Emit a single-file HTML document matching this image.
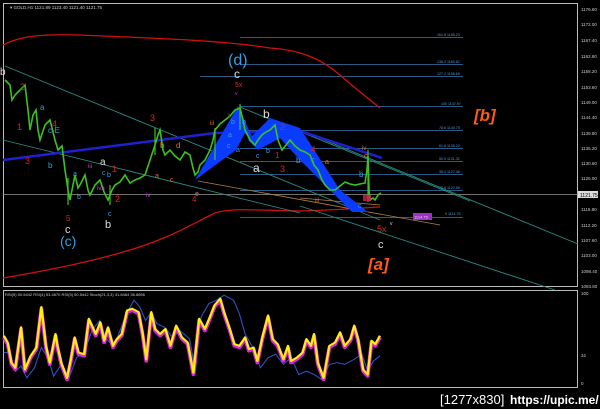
<!DOCTYPE html>
<html><head><style>
html,body{margin:0;padding:0;background:#000;width:600px;height:409px;overflow:hidden}
svg{display:block}
text{font-family:"Liberation Sans",sans-serif}
</style></head><body>
<svg width="600" height="409" viewBox="0 0 600 409" xmlns="http://www.w3.org/2000/svg">
<rect width="600" height="409" fill="#000"/>
<rect x="3.5" y="3.5" width="574" height="283" fill="none" stroke="#bbb" stroke-width="1"/>
<rect x="3.5" y="290.5" width="574" height="97" fill="none" stroke="#bbb" stroke-width="1"/>
<line x1="3" y1="194.5" x2="578" y2="194.5" stroke="#999" stroke-width="0.8"/>
<text x="10" y="9" fill="#ccc" font-size="4.5">▾ GOLD,H1  1121.89 1123.40 1121.40 1121.75</text>
<g fill="#ccc" font-size="4.5">
<text x="581" y="11">1176.60</text><text x="581" y="26">1172.00</text><text x="581" y="42">1167.40</text>
<text x="581" y="58">1162.80</text><text x="581" y="73">1158.20</text><text x="581" y="89">1153.60</text>
<text x="581" y="104">1149.00</text><text x="581" y="119">1144.40</text><text x="581" y="135">1139.80</text>
<text x="581" y="150">1135.20</text><text x="581" y="165">1130.60</text><text x="581" y="180">1126.00</text>
<text x="581" y="211">1116.80</text><text x="581" y="227">1112.20</text><text x="581" y="242">1107.60</text>
<text x="581" y="257">1103.00</text><text x="581" y="273">1098.40</text><text x="581" y="288">1093.80</text>
<text x="581" y="295">100</text><text x="581" y="357">32</text><text x="581" y="385">0</text>
</g>
<rect x="578" y="191" width="20" height="7" fill="#ddd"/>
<text x="580" y="197" fill="#000" font-size="5">1121.75</text>
<g stroke="#3a78b0" stroke-width="0.8">
<line x1="240" y1="37.5" x2="463" y2="37.5"/><line x1="240" y1="64.5" x2="463" y2="64.5"/>
<line x1="200" y1="76.5" x2="463" y2="76.5"/><line x1="240" y1="106.5" x2="463" y2="106.5"/>
<line x1="240" y1="130.5" x2="463" y2="130.5"/><line x1="240" y1="148.5" x2="463" y2="148.5"/>
<line x1="240" y1="161.5" x2="463" y2="161.5"/><line x1="240" y1="174.5" x2="463" y2="174.5"/>
<line x1="240" y1="190.5" x2="463" y2="190.5"/><line x1="240" y1="217.5" x2="463" y2="217.5"/>
</g>
<g fill="#5a9ad0" font-size="3.6">
<text x="437" y="36">161.8 1165.23</text><text x="437" y="63">138.2 1160.62</text><text x="437" y="75">127.2 1158.69</text>
<text x="441" y="105">100 1147.97</text><text x="439" y="129">78.6 1140.75</text><text x="439" y="147">61.8 1135.22</text>
<text x="439" y="160">50.0 1131.32</text><text x="439" y="173">38.2 1127.46</text><text x="439" y="189">23.6 1122.59</text>
<text x="445" y="215">0 1114.75</text>
</g>
<path d="M3,45 C20,36 40,34 80,35 C150,38 220,40 270,48 C300,50 320,58 340,75 C355,88 370,100 380,108" fill="none" stroke="#d01010" stroke-width="1.3"/>
<path d="M3,278 C50,270 90,262 130,250 C170,238 190,225 215,213 C230,208 250,210 300,211 C340,210 360,208 380,207" fill="none" stroke="#d01010" stroke-width="1.3"/>
<g stroke="#2a8a80" stroke-width="0.9" fill="none">
<line x1="5" y1="66" x2="380" y2="220"/>
<line x1="300" y1="130" x2="578" y2="244"/>
<line x1="300" y1="206" x2="555" y2="290"/>
<line x1="240" y1="107" x2="470" y2="201"/>
<line x1="3" y1="140" x2="300" y2="213"/>
</g>
<line x1="198" y1="181" x2="440" y2="225" stroke="#b08040" stroke-width="0.8"/>
<line x1="300" y1="198" x2="380" y2="205" stroke="#b08040" stroke-width="0.8"/>
<path d="M3,160 L215,133 L300,131 L382,158" fill="none" stroke="#2020d0" stroke-width="2.5"/>
<g fill="#0a3cff">
<polygon points="195,180 238,106 258,150 245,133 236,150"/>
<polygon points="248,140 270,118 300,128 340,190 368,212 352,212 300,160 280,138 258,150"/>
</g>
<polyline fill="none" stroke="#3ec020" stroke-width="1.6" points="5,80 10,85 12,100 15,95 20,90 25,85 28,110 30,130 33,115 36,110 38,130 40,140 45,125 50,120 53,132 55,140 58,150 62,146 65,170 68,190 70,200 73,185 75,175 78,188 80,185 85,175 88,190 90,195 95,185 100,180 104,192 108,200 112,190 115,185 120,182 125,175 130,183 135,180 140,178 145,175 150,160 155,145 158,135 160,130 163,150 165,155 170,150 175,156 180,160 185,152 190,155 193,168 195,175 198,172 200,165 205,160 210,150 213,140 215,130 220,124 225,120 230,116 235,110 240,108 243,120 245,130 250,140 255,145 258,140 262,135 266,132 270,130 275,125 278,140 282,150 286,145 290,140 295,146 300,150 305,152 310,155 314,165 318,170 322,180 325,185 330,190 335,190 340,186 345,182 350,184 355,185 360,184 365,183 367,170 368,156 369,190 370,200 373,198 375,200 378,195 381,193"/>
<g stroke="#3ec020" stroke-width="1.2">
<line x1="68" y1="178" x2="68" y2="205"/><line x1="110" y1="185" x2="110" y2="205"/><line x1="155" y1="128" x2="155" y2="155"/>
<line x1="215" y1="128" x2="215" y2="160"/><line x1="240" y1="104" x2="240" y2="130"/><line x1="368" y1="150" x2="368" y2="202"/>
</g>
<rect x="363" y="195" width="8" height="6" fill="#d02040" opacity="0.8"/>
<rect x="413" y="213" width="19" height="7" fill="#a030c0"/>
<text x="414" y="218.5" fill="#e0d0ff" font-size="4">1114.75</text>
<g font-family="Liberation Serif,serif">
<text x="0" y="75" fill="#ddd" font-size="10">b</text>
<text x="20" y="90" fill="#e02020" font-size="9">2</text>
<text x="17" y="130" fill="#e02020" font-size="9">1</text>
<text x="40" y="110" fill="#30a0e0" font-size="8">a</text>
<text x="48" y="133" fill="#30a0e0" font-size="8">c-E</text>
<text x="52" y="127" fill="#e02020" font-size="9">4</text>
<text x="25" y="164" fill="#e02020" font-size="9">3</text>
<text x="48" y="168" fill="#30a0e0" font-size="8">b</text>
<text x="73" y="176" fill="#30a0e0" font-size="7">a</text>
<text x="88" y="168" fill="#c040d0" font-size="6">iii</text>
<text x="100" y="165" fill="#ddd" font-size="10">a</text>
<text x="102" y="175" fill="#30a0e0" font-size="7">c</text>
<text x="97" y="190" fill="#c040d0" font-size="6">iva</text>
<text x="107" y="177" fill="#30a0e0" font-size="7">b</text>
<text x="112" y="172" fill="#e02020" font-size="9">1</text>
<text x="77" y="199" fill="#30a0e0" font-size="7">b</text>
<text x="66" y="221" fill="#e02020" font-size="8">5</text>
<text x="65" y="233" fill="#ddd" font-size="11">c</text>
<text x="60" y="246" fill="#30a0e0" font-size="14">(c)</text>
<text x="115" y="202" fill="#e02020" font-size="9">2</text>
<text x="108" y="216" fill="#30a0e0" font-size="7">c</text>
<text x="105" y="228" fill="#ddd" font-size="11">b</text>
<text x="150" y="121" fill="#e02020" font-size="9">3</text>
<text x="160" y="148" fill="#e07030" font-size="8">b</text>
<text x="176" y="148" fill="#e07030" font-size="8">d</text>
<text x="170" y="182" fill="#e07030" font-size="7">c</text>
<text x="155" y="178" fill="#e07030" font-size="7">a</text>
<text x="146" y="197" fill="#c040d0" font-size="6">iv</text>
<text x="195" y="196" fill="#e07030" font-size="7">e</text>
<text x="192" y="202" fill="#e02020" font-size="8">4</text>
<text x="228" y="65" fill="#30a0e0" font-size="16">(d)</text>
<text x="234" y="78" fill="#ddd" font-size="12">c</text>
<text x="235" y="87" fill="#e02020" font-size="7">5x</text>
<text x="235" y="95" fill="#c040d0" font-size="5">v</text>
<text x="210" y="125" fill="#e07030" font-size="6">iii</text>
<text x="227" y="118" fill="#e02020" font-size="6">3</text>
<text x="231" y="124" fill="#30a0e0" font-size="7">b</text>
<text x="242" y="124" fill="#30a0e0" font-size="7">b</text>
<text x="228" y="137" fill="#30a0e0" font-size="7">a</text>
<text x="227" y="148" fill="#30a0e0" font-size="7">c</text>
<text x="236" y="152" fill="#30a0e0" font-size="7">a</text>
<text x="263" y="118" fill="#ddd" font-size="12">b</text>
<text x="280" y="130" fill="#e02020" font-size="9">2</text>
<text x="253" y="172" fill="#ddd" font-size="12">a</text>
<text x="256" y="158" fill="#30a0e0" font-size="7">c</text>
<text x="266" y="153" fill="#30a0e0" font-size="7">b</text>
<text x="275" y="158" fill="#e02020" font-size="8">1</text>
<text x="280" y="172" fill="#e02020" font-size="9">3</text>
<text x="296" y="163" fill="#30a0e0" font-size="8">b</text>
<text x="311" y="152" fill="#e02020" font-size="8">4</text>
<text x="311" y="162" fill="#30a0e0" font-size="7">c</text>
<text x="325" y="164" fill="#e07030" font-size="7">a</text>
<text x="315" y="202" fill="#e07030" font-size="6">iii</text>
<text x="359" y="177" fill="#30a0e0" font-size="8">b</text>
<text x="362" y="150" fill="#e07030" font-size="6">iv</text>
<text x="364" y="158" fill="#e07030" font-size="7">c</text>
<text x="358" y="208" fill="#30a0e0" font-size="7">c</text>
<text x="377" y="232" fill="#e02020" font-size="9">5x</text>
<text x="378" y="248" fill="#ddd" font-size="11">c</text>
<text x="390" y="225" fill="#ddd" font-size="5">v</text>
</g>
<text x="368" y="270" fill="#ff5a10" font-size="17" font-style="italic" font-weight="bold" font-family="Liberation Sans,sans-serif">[a]</text>
<text x="474" y="121" fill="#ff5a10" font-size="17" font-style="italic" font-weight="bold" font-family="Liberation Sans,sans-serif">[b]</text>
<text x="5" y="296" fill="#ccc" font-size="4">RSI(5) 50.5442   RSI(4) 53.4670   RSI(5) 50.5442   Stoch(21,3,3) 31.8464 36.8896</text>
<g transform="translate(0,280) scale(0.383,0.3375)">
<polyline fill="none" stroke="#3050c0" stroke-width="3" points="10,215 25,215 40,270 55,255 70,290 90,260 108,200 125,230 140,285 160,250 180,290 200,230 220,215 240,150 260,120 275,170 290,190 305,175 330,100 350,60 365,80 380,120 395,95 410,130 430,140 450,170 470,150 495,175 510,270 525,110 545,70 565,60 585,45 610,60 625,100 640,160 660,200 680,260 700,230 720,220 740,250 760,230 780,280 800,270 820,280 840,295 860,250 880,245 900,250 925,235 945,220 960,270 975,240 992,225"/>
<polyline fill="none" stroke="#e020e0" stroke-width="10" stroke-linejoin="round" points="10,170 20,190 30,250 40,265 55,145 65,270 80,230 95,205 108,85 120,200 130,250 145,165 150,200 160,250 175,295 185,240 195,175 205,220 220,225 232,120 240,140 250,165 262,130 272,185 282,145 295,200 305,180 318,165 332,95 345,90 362,100 372,160 382,240 395,100 405,150 418,165 432,150 445,200 460,140 475,175 490,190 505,280 520,120 535,150 548,115 560,80 575,60 585,100 600,150 612,195 625,200 640,175 650,210 662,205 672,245 685,175 700,110 712,180 725,195 740,240 752,200 760,245 775,235 790,220 800,180 812,200 820,165 830,250 845,295 860,200 875,190 888,160 900,200 915,180 925,140 935,180 948,270 960,285 970,185 980,195 992,170"/>
<polyline fill="none" stroke="#ffee10" stroke-width="6" stroke-linejoin="round" points="10,165 20,185 30,245 40,260 55,140 65,265 80,225 95,200 108,80 120,195 130,245 145,160 150,195 160,245 175,290 185,235 195,170 205,215 220,220 232,115 240,135 250,160 262,125 272,180 282,140 295,195 305,175 318,160 332,90 345,85 362,95 372,155 382,235 395,95 405,145 418,160 432,145 445,195 460,135 475,170 490,185 505,275 520,115 535,145 548,110 560,75 575,55 585,95 600,145 612,190 625,195 640,170 650,205 662,200 672,240 685,170 700,105 712,175 725,190 740,235 752,195 760,240 775,230 790,215 800,175 812,195 820,160 830,245 845,290 860,195 875,185 888,155 900,195 915,175 925,135 935,175 948,265 960,280 970,180 980,190 992,165"/>
</g>
<text x="440" y="404" fill="#fff" font-size="13" font-family="Liberation Sans Narrow,Liberation Sans,sans-serif">[1277x830]</text>
<text x="510" y="404" fill="#fff" font-size="12" font-family="Liberation Mono,monospace" font-weight="bold">https://upic.me/</text>
</svg>
</body></html>
